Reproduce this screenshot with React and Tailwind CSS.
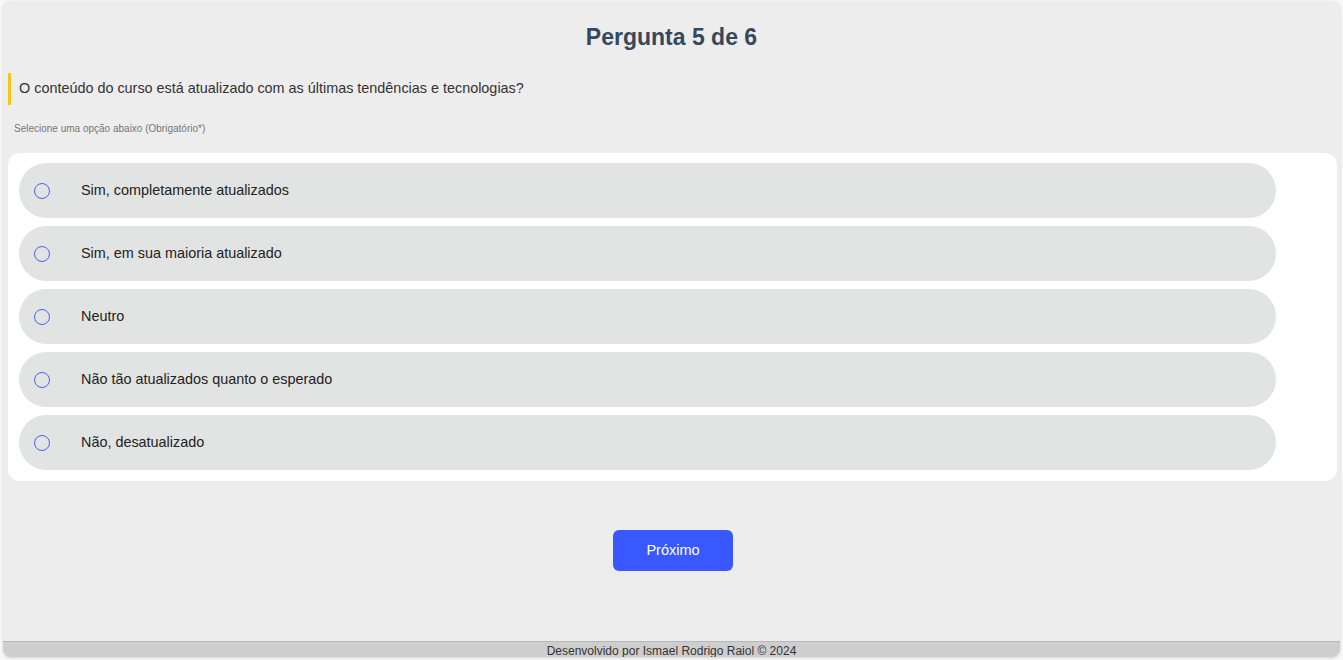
import React, { useState } from "react";

const options = [
  "Sim, completamente atualizados",
  "Sim, em sua maioria atualizado",
  "Neutro",
  "Não tão atualizados quanto o esperado",
  "Não, desatualizado",
];

function App() {
  const [selected, setSelected] = useState(null);

  return (
    <div className="h-[660px] bg-[#f7f7f7] pt-[1px] px-[3px] font-['Liberation_Sans',Arial,sans-serif] overflow-hidden">
      <div className="h-[656px] flex flex-col bg-[#ededed] rounded-lg shadow-[0_1px_3px_rgba(0,0,0,0.15)] overflow-hidden">
        <div className="flex-1 flex flex-col">
          <h1 className="pt-[22px] text-center text-[23px] leading-[28px] font-bold text-[#34495e]">
            Pergunta 5 de 6
          </h1>

          <div className="mt-[22px] ml-[5px] h-[32px] flex items-center border-l-[3px] border-[#f5c518] pl-[8px] text-[14.4px] text-[#333]">
            O conteúdo do curso está atualizado com as últimas tendências e tecnologias?
          </div>

          <p className="mt-[18px] ml-[11px] text-[10px] leading-[12px] text-[#777]">
            Selecione uma opção abaixo (Obrigatório*)
          </p>

          <div className="mt-[18px] ml-[5px] mr-[3px] bg-white rounded-xl px-[11px] pt-[10px] pb-[11px] flex flex-col gap-[8px]">
            {options.map((opt, i) => (
              <label
                key={i}
                className="w-[1257px] h-[55px] flex items-center rounded-full bg-[#e2e3e3] cursor-pointer"
                onClick={() => setSelected(i)}
              >
                <span className="ml-[15px] w-[16px] h-[16px] rounded-full border-[1.5px] border-[#4a63f5] flex items-center justify-center">
                  {selected === i && <span className="w-[8px] h-[8px] rounded-full bg-[#4a63f5]" />}
                </span>
                <span className="ml-[31px] text-[14.4px] text-[#222]">{opt}</span>
              </label>
            ))}
          </div>

          <div className="mt-[49px] flex justify-center">
            <button className="ml-[3px] w-[120px] h-[41px] rounded-md bg-[#3a58ff] text-white text-[14.5px]">
              Próximo
            </button>
          </div>
        </div>

        <footer className="h-[16px] border-t border-[#b8b8b8] bg-[#cecece] text-center text-[12px] leading-[18px] text-[#333] overflow-hidden">
          Desenvolvido por Ismael Rodrigo Raiol © 2024
        </footer>
      </div>
    </div>
  );
}

export default App;
